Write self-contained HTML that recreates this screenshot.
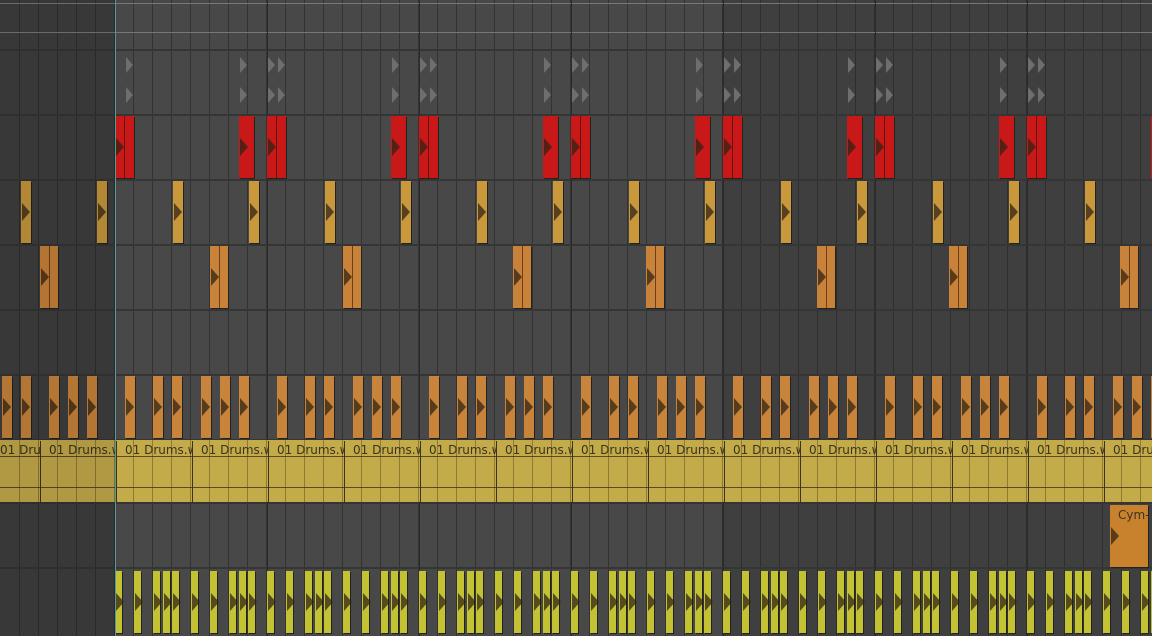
<!DOCTYPE html>
<html><head><meta charset="utf-8"><style>
html,body{margin:0;padding:0;}
body{width:1152px;height:636px;overflow:hidden;position:relative;background:#484848;font-family:"DejaVu Sans","Liberation Sans",sans-serif;}
.bgd{position:absolute;top:0;height:636px;background:#3f3f3f;}
.grid{position:absolute;left:0;top:0;width:1152px;height:636px;
background-image:repeating-linear-gradient(90deg,transparent 0 18px,rgba(20,20,20,.4) 18px 19px);background-position:1px 0;}
.bar{position:absolute;top:0;height:636px;width:1px;background:#2a2a2a;}
.row{position:absolute;left:0;width:1152px;height:2px;background:#353535;}
.c{position:absolute;box-shadow:1px 1px 0 #222;}
.c:after{content:"";position:absolute;left:1px;top:50%;margin-top:-9px;border-left:8px solid rgba(50,35,20,.75);border-top:9px solid transparent;border-bottom:9px solid transparent;}
.lab{position:absolute;top:441px;height:61px;border-left:1px solid #3a3320;overflow:hidden;}
.lab span{position:absolute;left:8px;top:2px;font-size:12px;color:#3a3320;white-space:nowrap;}
.ov{position:absolute;left:0;top:0;width:115px;height:636px;background:rgba(0,0,0,.1);border-right:1px solid #5a9a96;}
.gm{position:absolute;width:0;height:0;border-left:7px solid #6e6e6e;border-top:8px solid transparent;border-bottom:8px solid transparent;}
</style></head><body>
<div class="bgd" style="left:0;width:115px"></div>
<div class="bgd" style="left:722px;width:430px"></div>
<div class="grid"></div>
<div id="b"></div>
<div style="position:absolute;left:0;top:440px;width:1152px;height:62px;background:#c4ab4a;"></div>
<div style="position:absolute;left:0;top:456px;width:1152px;height:1px;background:#5a4a28"></div>
<div style="position:absolute;left:0;top:487px;width:1152px;height:1px;background:#5a4a28"></div>
<div style="position:absolute;left:0;top:440px;width:1152px;height:62px;background-image:repeating-linear-gradient(90deg,transparent 0 18px,rgba(60,50,20,.4) 18px 19px);background-position:1px 0"></div>
<div id="d"></div>
<div class="ov"></div>
<script>
var b=document.getElementById('b'),d=document.getElementById('d'),h='',g='';
[50,115,180,245,310,375,440,503,568].forEach(function(y){h+='<div class="row" style="top:'+(y-1)+'px"></div>';});
h+='<div style="position:absolute;left:0;top:3px;width:1152px;height:1px;background:#777"></div>';
h+='<div style="position:absolute;left:0;top:32px;width:1152px;height:1px;background:#777"></div>';
for(var x=115;x<1152;x+=152)h+='<div class="bar" style="left:'+x+'px"></div>';
function c(x,y,w,hh,col){g+='<div class="c" style="left:'+x+'px;top:'+y+'px;width:'+w+'px;height:'+hh+'px;background:'+col+'"></div>';}
for(var s=115;s<1152;s+=152){
 c(s,116,19,62,'#c81818');c(s+124,116,15,62,'#c81818');
 g+='<div style="position:absolute;left:'+(s+9)+'px;top:116px;width:1px;height:62px;background:#6a1010"></div>';
 [10,38,57,86,105,124].forEach(function(o){c(s+o,376,10,62,'#c8843a');});
 [0,19,38,48,57,76,95,114,124,133].forEach(function(o){if(s+o<1152)c(s+o,571,7,62,'#c2c232');});
 [0,10,-28].forEach(function(o){if(s+o>115){g+='<div class="gm" style="left:'+(s+o+1)+'px;top:57px"></div><div class="gm" style="left:'+(s+o+1)+'px;top:87px"></div>';}});
}
[2,21,49,68,87].forEach(function(x){c(x,376,10,62,'#c8843a');});
for(var x=21;x<1152;x+=76)c(x,181,10,62,'#c8983a');
[40,210,343,513,646,817,949,1120].forEach(function(x){c(x,246,18,62,'#c8823a');g+='<div style="position:absolute;left:'+(x+9)+'px;top:246px;width:1px;height:62px;background:#6a4018"></div>';});
g+='<div class="lab" style="left:0;width:40px;border-left:none"><span style="left:0">01 Drums.wav</span></div>';
for(var x=40;x<1152;x+=76)g+='<div class="lab" style="left:'+x+'px;width:75px"><span>01 Drums.wav</span></div>';
g+='<div class="c" style="left:1110px;top:505px;width:38px;height:62px;background:#c8822e"><span style="position:absolute;left:8px;top:3px;font-size:12px;color:#3a3320">Cym-</span></div>';
b.innerHTML=h;d.innerHTML=g;
</script>
</body></html>
